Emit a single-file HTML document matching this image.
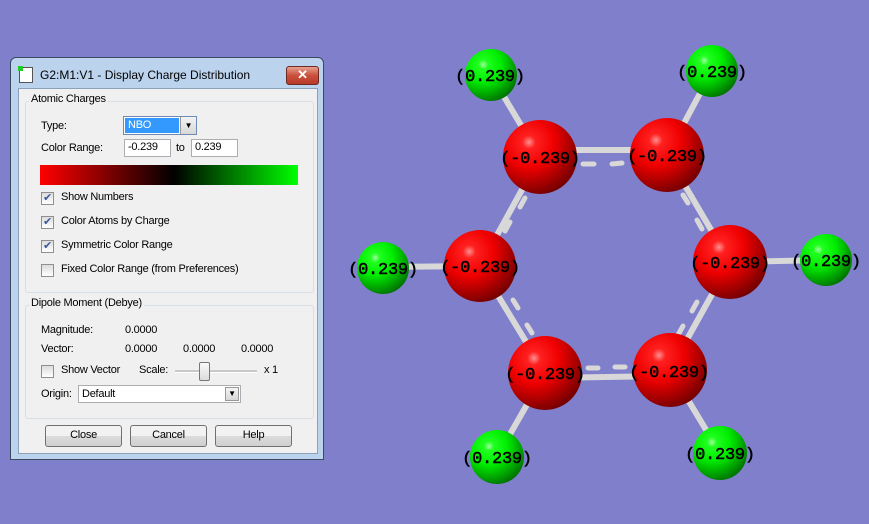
<!DOCTYPE html>
<html><head><meta charset="utf-8"><style>
body{margin:0;width:869px;height:524px;background:#7f7fcc;position:relative;overflow:hidden;font-family:"Liberation Sans",sans-serif;font-size:11px;letter-spacing:-0.25px;color:#000}
.abs{position:absolute}
#dlg{left:10px;top:57px;width:314px;height:403px;background:#bcd3ee;border:1px solid #3c4a60;border-radius:6px 6px 0 0;box-sizing:border-box}
#body{left:7px;top:30px;width:298px;height:364px;background:#f0f0f0;border:1px solid #8ca0bc}
.grp{border:1px solid #d5dfe5;border-radius:3px}
.lg{background:#f0f0f0;padding:0 2px}
.cb{width:11px;height:11px;border:1px solid #8f8f8f;background:linear-gradient(#dcdcdc,#fff)}
.chk{font-size:11px;color:#3a5a9c;line-height:11px;text-align:center}
.inp{background:#fff;border:1px solid #abadb3;box-sizing:border-box;padding:1px 3px}
.btn{border:1px solid #707070;border-radius:3px;background:linear-gradient(#f2f2f2 50%,#dcdcdc 50%,#cfcfcf);text-align:center;line-height:19px;box-sizing:border-box}
</style></head><body>
<svg class="abs" style="left:0;top:0" width="869" height="524">
<defs>
<radialGradient id="r" cx="0.35" cy="0.3" r="0.75"><stop offset="0" stop-color="#ff9090"/><stop offset="0.12" stop-color="#ff2020"/><stop offset="0.45" stop-color="#f00000"/><stop offset="1" stop-color="#700000"/></radialGradient>
<radialGradient id="g" cx="0.35" cy="0.3" r="0.75"><stop offset="0" stop-color="#a0ffa0"/><stop offset="0.12" stop-color="#20ff20"/><stop offset="0.45" stop-color="#00ee00"/><stop offset="1" stop-color="#007000"/></radialGradient>
</defs>
<g stroke="#d8d8d8" stroke-width="6" stroke-linecap="round">
<line x1="491" y1="75" x2="540" y2="157"/><line x1="712" y1="71" x2="667" y2="155"/>
<line x1="383" y1="267" x2="480" y2="266"/><line x1="826" y1="260" x2="730" y2="262"/>
<line x1="497" y1="457" x2="545" y2="373"/><line x1="720" y1="453" x2="670" y2="370"/>
<line x1="540" y1="150" x2="667" y2="150"/><line x1="730" y1="262" x2="667" y2="155"/>
<line x1="730" y1="262" x2="670" y2="370"/><line x1="545" y1="378" x2="670" y2="376"/>
<line x1="480" y1="266" x2="545" y2="373"/><line x1="480" y1="266" x2="540" y2="157"/>
</g>
<g stroke="#d8d8d8" stroke-width="5" stroke-linecap="round">
<line x1="583" y1="164" x2="594" y2="164"/><line x1="612" y1="164" x2="622" y2="163"/>
<line x1="525" y1="198" x2="520" y2="207"/><line x1="510" y1="222" x2="505" y2="231"/>
<line x1="683" y1="195" x2="688" y2="203"/><line x1="697" y1="220" x2="702" y2="229"/>
<line x1="513" y1="300" x2="518" y2="308"/><line x1="527" y1="325" x2="532" y2="333"/>
<line x1="697" y1="302" x2="692" y2="311"/><line x1="683" y1="326" x2="678" y2="335"/>
<line x1="588" y1="368" x2="598" y2="368"/><line x1="615" y1="367" x2="625" y2="367"/>
</g>
<g fill="url(#r)"><circle cx="540" cy="157" r="37"/><circle cx="667" cy="155" r="37"/><circle cx="480" cy="266" r="36"/><circle cx="730" cy="262" r="37"/><circle cx="545" cy="373" r="37"/><circle cx="670" cy="370" r="37"/></g>
<g fill="url(#g)"><circle cx="491" cy="75" r="26"/><circle cx="712" cy="71" r="26"/><circle cx="383" cy="268" r="26"/><circle cx="826" cy="260" r="26"/><circle cx="497" cy="457" r="27"/><circle cx="720" cy="453" r="27"/></g>
<g font-family="Liberation Mono,monospace" font-size="17" text-anchor="middle" fill="#000" stroke="#000" stroke-width="0.5">
<text x="490" y="81">(0.239)</text><text x="712" y="77">(0.239)</text>
<text x="383" y="274">(0.239)</text><text x="826" y="266">(0.239)</text>
<text x="497" y="463">(0.239)</text><text x="720" y="459">(0.239)</text>
<text x="540" y="163">(-0.239)</text><text x="667" y="161">(-0.239)</text>
<text x="480" y="272">(-0.239)</text><text x="730" y="268">(-0.239)</text>
<text x="545" y="379">(-0.239)</text><text x="669" y="377">(-0.239)</text>
</g>
</svg>
<div id="dlg" class="abs">
 <div class="abs" style="left:8px;top:9px;width:12px;height:14px;background:#fff;border:1px solid #555"></div>
 <div class="abs" style="left:7px;top:8px;width:5px;height:5px;background:#2c2"></div>
 <div class="abs" style="left:29px;top:10px;font-size:12px;letter-spacing:0">G2:M1:V1 - Display Charge Distribution</div>
 <div class="abs" style="left:275px;top:8px;width:31px;height:17px;border-radius:3px;border:1px solid #6b2a22;background:linear-gradient(#e8a090,#c9503c 50%,#b83a28);color:#fff;font-weight:bold;text-align:center;line-height:16px;font-size:13px">✕</div>
 <div id="body" class="abs">
  <div class="grp abs" style="left:6px;top:12px;width:287px;height:190px"></div>
  <div class="abs lg" style="left:10px;top:4px">Atomic Charges</div>
  <div class="abs" style="left:22px;top:31px">Type:</div>
  <div class="abs" style="left:104px;top:27px;width:72px;height:17px;border:1px solid #6e8bb5;background:#fff"><div style="position:absolute;left:1px;top:1px;width:54px;height:15px;background:#3399ff;color:#fff;padding-left:3px;box-sizing:border-box;line-height:14px">NBO</div><div style="position:absolute;right:0;top:0;width:15px;height:17px;background:linear-gradient(#f3f3f3,#d8d8d8);border-left:1px solid #999;font-size:8px;text-align:center;line-height:17px">▼</div></div>
  <div class="abs" style="left:22px;top:53px">Color Range:</div>
  <div class="abs inp" style="left:105px;top:50px;width:47px;height:18px">-0.239</div>
  <div class="abs" style="left:157px;top:53px">to</div>
  <div class="abs inp" style="left:172px;top:50px;width:47px;height:18px">0.239</div>
  <div class="abs" style="left:21px;top:76px;width:258px;height:20px;background:linear-gradient(90deg,#ff0000,#000 52%,#00ff00)"></div>
  <div class="abs cb chk" style="left:22px;top:103px">✔</div><div class="abs" style="left:42px;top:102px">Show Numbers</div>
  <div class="abs cb chk" style="left:22px;top:127px">✔</div><div class="abs" style="left:42px;top:126px">Color Atoms by Charge</div>
  <div class="abs cb chk" style="left:22px;top:151px">✔</div><div class="abs" style="left:42px;top:150px">Symmetric Color Range</div>
  <div class="abs cb" style="left:22px;top:175px"></div><div class="abs" style="left:42px;top:174px">Fixed Color Range (from Preferences)</div>
  <div class="grp abs" style="left:6px;top:216px;width:287px;height:112px"></div>
  <div class="abs lg" style="left:10px;top:208px">Dipole Moment (Debye)</div>
  <div class="abs" style="left:22px;top:235px">Magnitude:</div><div class="abs" style="left:106px;top:235px">0.0000</div>
  <div class="abs" style="left:22px;top:254px">Vector:</div><div class="abs" style="left:106px;top:254px">0.0000</div><div class="abs" style="left:164px;top:254px">0.0000</div><div class="abs" style="left:222px;top:254px">0.0000</div>
  <div class="abs cb" style="left:22px;top:276px"></div><div class="abs" style="left:42px;top:275px">Show Vector</div>
  <div class="abs" style="left:120px;top:275px">Scale:</div>
  <div class="abs" style="left:156px;top:281px;width:82px;height:2px;background:#c8c8c8;border-bottom:1px solid #fff"></div>
  <div class="abs" style="left:180px;top:273px;width:9px;height:17px;border:1px solid #777;border-radius:2px;background:linear-gradient(#fafafa,#dcdcdc)"></div>
  <div class="abs" style="left:245px;top:275px">x 1</div>
  <div class="abs" style="left:22px;top:299px">Origin:</div>
  <div class="abs inp" style="left:59px;top:296px;width:163px;height:18px;line-height:14px">Default<div style="position:absolute;right:1px;top:1px;width:14px;height:14px;border:1px solid #999;box-sizing:border-box;background:linear-gradient(#f3f3f3,#d8d8d8);font-size:8px;text-align:center;line-height:12px">▼</div></div>
  <div class="abs btn" style="left:26px;top:336px;width:77px;height:22px">Close</div>
  <div class="abs btn" style="left:111px;top:336px;width:77px;height:22px">Cancel</div>
  <div class="abs btn" style="left:196px;top:336px;width:77px;height:22px">Help</div>
 </div>
</div>
</body></html>
